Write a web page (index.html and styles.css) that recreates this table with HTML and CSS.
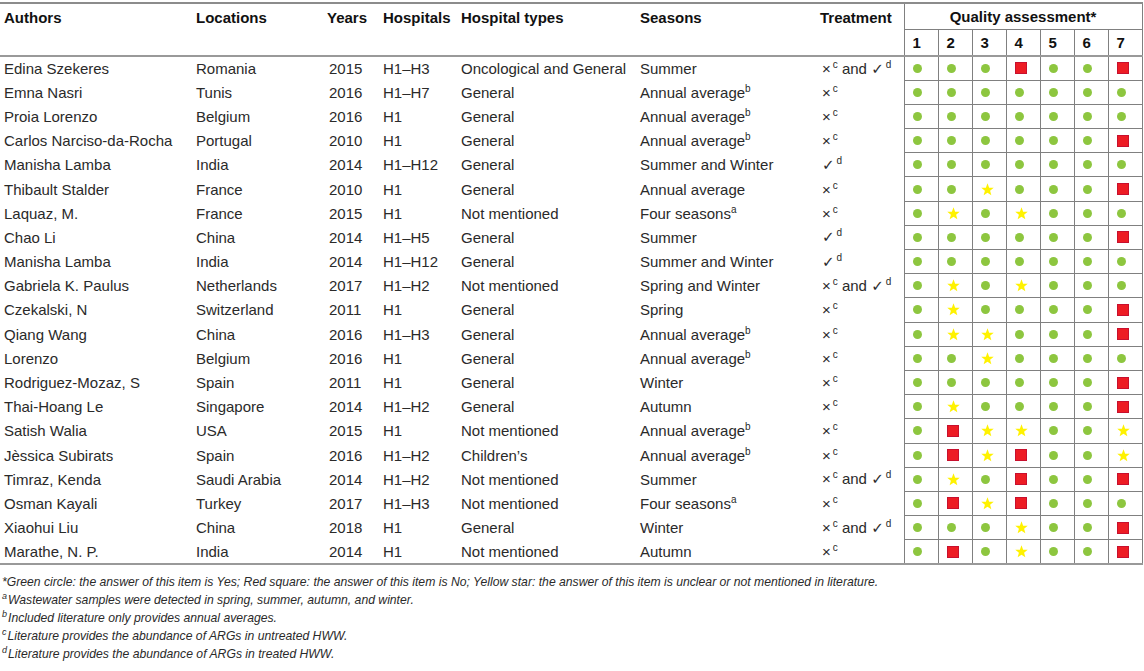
FILE: index.html
```html
<!DOCTYPE html>
<html>
<head>
<meta charset="utf-8">
<link rel="stylesheet" href="styles.css">
</head>
<body>
<table class="tbl">
<colgroup>
<col class="c-auth"><col class="c-loc"><col class="c-year"><col class="c-hosp"><col class="c-type"><col class="c-seas"><col class="c-treat">
<col class="c-q"><col class="c-q"><col class="c-q"><col class="c-q"><col class="c-q"><col class="c-q"><col class="c-q">
</colgroup>
<thead>
<tr class="h1">
<th rowspan="2" class="lh">Authors</th>
<th rowspan="2" class="lh">Locations</th>
<th rowspan="2" class="lh">Years</th>
<th rowspan="2" class="lh">Hospitals</th>
<th rowspan="2" class="lh">Hospital types</th>
<th rowspan="2" class="lh">Seasons</th>
<th rowspan="2" class="lh">Treatment</th>
<th colspan="7" class="qa">Quality assessment*</th>
</tr>
<tr class="h2">
<th class="qn">1</th><th class="qn">2</th><th class="qn">3</th><th class="qn">4</th><th class="qn">5</th><th class="qn">6</th><th class="qn">7</th>
</tr>
</thead>
<tbody>
<tr><td>Edina Szekeres</td><td>Romania</td><td>2015</td><td>H1–H3</td><td>Oncological and General</td><td>Summer</td><td>×<sup class="t">c</sup> and <span class="ck">✓</span><sup class="t">d</sup></td>
<td class="q"><i class="g"></i></td><td class="q"><i class="g"></i></td><td class="q"><i class="g"></i></td><td class="q"><i class="r"></i></td><td class="q"><i class="g"></i></td><td class="q"><i class="g"></i></td><td class="q"><i class="r"></i></td></tr>
<tr><td>Emna Nasri</td><td>Tunis</td><td>2016</td><td>H1–H7</td><td>General</td><td>Annual average<sup>b</sup></td><td>×<sup class="t">c</sup></td>
<td class="q"><i class="g"></i></td><td class="q"><i class="g"></i></td><td class="q"><i class="g"></i></td><td class="q"><i class="g"></i></td><td class="q"><i class="g"></i></td><td class="q"><i class="g"></i></td><td class="q"><i class="g"></i></td></tr>
<tr><td>Proia Lorenzo</td><td>Belgium</td><td>2016</td><td>H1</td><td>General</td><td>Annual average<sup>b</sup></td><td>×<sup class="t">c</sup></td>
<td class="q"><i class="g"></i></td><td class="q"><i class="g"></i></td><td class="q"><i class="g"></i></td><td class="q"><i class="g"></i></td><td class="q"><i class="g"></i></td><td class="q"><i class="g"></i></td><td class="q"><i class="g"></i></td></tr>
<tr><td>Carlos Narciso-da-Rocha</td><td>Portugal</td><td>2010</td><td>H1</td><td>General</td><td>Annual average<sup>b</sup></td><td>×<sup class="t">c</sup></td>
<td class="q"><i class="g"></i></td><td class="q"><i class="g"></i></td><td class="q"><i class="g"></i></td><td class="q"><i class="g"></i></td><td class="q"><i class="g"></i></td><td class="q"><i class="g"></i></td><td class="q"><i class="r"></i></td></tr>
<tr><td>Manisha Lamba</td><td>India</td><td>2014</td><td>H1–H12</td><td>General</td><td>Summer and Winter</td><td><span class="ck">✓</span><sup class="t">d</sup></td>
<td class="q"><i class="g"></i></td><td class="q"><i class="g"></i></td><td class="q"><i class="g"></i></td><td class="q"><i class="g"></i></td><td class="q"><i class="g"></i></td><td class="q"><i class="g"></i></td><td class="q"><i class="g"></i></td></tr>
<tr><td>Thibault Stalder</td><td>France</td><td>2010</td><td>H1</td><td>General</td><td>Annual average</td><td>×<sup class="t">c</sup></td>
<td class="q"><i class="g"></i></td><td class="q"><i class="g"></i></td><td class="q"><svg class="y" viewBox="0 0 24 24"><polygon points="12,0.5 15,8.6 23.5,8.8 16.8,14.2 19.1,22.8 12,17.9 4.9,22.8 7.2,14.2 0.5,8.8 9,8.6"/></svg></td><td class="q"><i class="g"></i></td><td class="q"><i class="g"></i></td><td class="q"><i class="g"></i></td><td class="q"><i class="r"></i></td></tr>
<tr><td>Laquaz, M.</td><td>France</td><td>2015</td><td>H1</td><td>Not mentioned</td><td>Four seasons<sup>a</sup></td><td>×<sup class="t">c</sup></td>
<td class="q"><i class="g"></i></td><td class="q"><svg class="y" viewBox="0 0 24 24"><polygon points="12,0.5 15,8.6 23.5,8.8 16.8,14.2 19.1,22.8 12,17.9 4.9,22.8 7.2,14.2 0.5,8.8 9,8.6"/></svg></td><td class="q"><i class="g"></i></td><td class="q"><svg class="y" viewBox="0 0 24 24"><polygon points="12,0.5 15,8.6 23.5,8.8 16.8,14.2 19.1,22.8 12,17.9 4.9,22.8 7.2,14.2 0.5,8.8 9,8.6"/></svg></td><td class="q"><i class="g"></i></td><td class="q"><i class="g"></i></td><td class="q"><i class="g"></i></td></tr>
<tr><td>Chao Li</td><td>China</td><td>2014</td><td>H1–H5</td><td>General</td><td>Summer</td><td><span class="ck">✓</span><sup class="t">d</sup></td>
<td class="q"><i class="g"></i></td><td class="q"><i class="g"></i></td><td class="q"><i class="g"></i></td><td class="q"><i class="g"></i></td><td class="q"><i class="g"></i></td><td class="q"><i class="g"></i></td><td class="q"><i class="r"></i></td></tr>
<tr><td>Manisha Lamba</td><td>India</td><td>2014</td><td>H1–H12</td><td>General</td><td>Summer and Winter</td><td><span class="ck">✓</span><sup class="t">d</sup></td>
<td class="q"><i class="g"></i></td><td class="q"><i class="g"></i></td><td class="q"><i class="g"></i></td><td class="q"><i class="g"></i></td><td class="q"><i class="g"></i></td><td class="q"><i class="g"></i></td><td class="q"><i class="g"></i></td></tr>
<tr><td>Gabriela K. Paulus</td><td>Netherlands</td><td>2017</td><td>H1–H2</td><td>Not mentioned</td><td>Spring and Winter</td><td>×<sup class="t">c</sup> and <span class="ck">✓</span><sup class="t">d</sup></td>
<td class="q"><i class="g"></i></td><td class="q"><svg class="y" viewBox="0 0 24 24"><polygon points="12,0.5 15,8.6 23.5,8.8 16.8,14.2 19.1,22.8 12,17.9 4.9,22.8 7.2,14.2 0.5,8.8 9,8.6"/></svg></td><td class="q"><i class="g"></i></td><td class="q"><svg class="y" viewBox="0 0 24 24"><polygon points="12,0.5 15,8.6 23.5,8.8 16.8,14.2 19.1,22.8 12,17.9 4.9,22.8 7.2,14.2 0.5,8.8 9,8.6"/></svg></td><td class="q"><i class="g"></i></td><td class="q"><i class="g"></i></td><td class="q"><i class="g"></i></td></tr>
<tr><td>Czekalski, N</td><td>Switzerland</td><td>2011</td><td>H1</td><td>General</td><td>Spring</td><td>×<sup class="t">c</sup></td>
<td class="q"><i class="g"></i></td><td class="q"><svg class="y" viewBox="0 0 24 24"><polygon points="12,0.5 15,8.6 23.5,8.8 16.8,14.2 19.1,22.8 12,17.9 4.9,22.8 7.2,14.2 0.5,8.8 9,8.6"/></svg></td><td class="q"><i class="g"></i></td><td class="q"><i class="g"></i></td><td class="q"><i class="g"></i></td><td class="q"><i class="g"></i></td><td class="q"><i class="r"></i></td></tr>
<tr><td>Qiang Wang</td><td>China</td><td>2016</td><td>H1–H3</td><td>General</td><td>Annual average<sup>b</sup></td><td>×<sup class="t">c</sup></td>
<td class="q"><i class="g"></i></td><td class="q"><svg class="y" viewBox="0 0 24 24"><polygon points="12,0.5 15,8.6 23.5,8.8 16.8,14.2 19.1,22.8 12,17.9 4.9,22.8 7.2,14.2 0.5,8.8 9,8.6"/></svg></td><td class="q"><svg class="y" viewBox="0 0 24 24"><polygon points="12,0.5 15,8.6 23.5,8.8 16.8,14.2 19.1,22.8 12,17.9 4.9,22.8 7.2,14.2 0.5,8.8 9,8.6"/></svg></td><td class="q"><i class="g"></i></td><td class="q"><i class="g"></i></td><td class="q"><i class="g"></i></td><td class="q"><i class="r"></i></td></tr>
<tr><td>Lorenzo</td><td>Belgium</td><td>2016</td><td>H1</td><td>General</td><td>Annual average<sup>b</sup></td><td>×<sup class="t">c</sup></td>
<td class="q"><i class="g"></i></td><td class="q"><i class="g"></i></td><td class="q"><svg class="y" viewBox="0 0 24 24"><polygon points="12,0.5 15,8.6 23.5,8.8 16.8,14.2 19.1,22.8 12,17.9 4.9,22.8 7.2,14.2 0.5,8.8 9,8.6"/></svg></td><td class="q"><i class="g"></i></td><td class="q"><i class="g"></i></td><td class="q"><i class="g"></i></td><td class="q"><i class="g"></i></td></tr>
<tr><td>Rodriguez-Mozaz, S</td><td>Spain</td><td>2011</td><td>H1</td><td>General</td><td>Winter</td><td>×<sup class="t">c</sup></td>
<td class="q"><i class="g"></i></td><td class="q"><i class="g"></i></td><td class="q"><i class="g"></i></td><td class="q"><i class="g"></i></td><td class="q"><i class="g"></i></td><td class="q"><i class="g"></i></td><td class="q"><i class="r"></i></td></tr>
<tr><td>Thai-Hoang Le</td><td>Singapore</td><td>2014</td><td>H1–H2</td><td>General</td><td>Autumn</td><td>×<sup class="t">c</sup></td>
<td class="q"><i class="g"></i></td><td class="q"><svg class="y" viewBox="0 0 24 24"><polygon points="12,0.5 15,8.6 23.5,8.8 16.8,14.2 19.1,22.8 12,17.9 4.9,22.8 7.2,14.2 0.5,8.8 9,8.6"/></svg></td><td class="q"><i class="g"></i></td><td class="q"><i class="g"></i></td><td class="q"><i class="g"></i></td><td class="q"><i class="g"></i></td><td class="q"><i class="r"></i></td></tr>
<tr><td>Satish Walia</td><td>USA</td><td>2015</td><td>H1</td><td>Not mentioned</td><td>Annual average<sup>b</sup></td><td>×<sup class="t">c</sup></td>
<td class="q"><i class="g"></i></td><td class="q"><i class="r"></i></td><td class="q"><svg class="y" viewBox="0 0 24 24"><polygon points="12,0.5 15,8.6 23.5,8.8 16.8,14.2 19.1,22.8 12,17.9 4.9,22.8 7.2,14.2 0.5,8.8 9,8.6"/></svg></td><td class="q"><svg class="y" viewBox="0 0 24 24"><polygon points="12,0.5 15,8.6 23.5,8.8 16.8,14.2 19.1,22.8 12,17.9 4.9,22.8 7.2,14.2 0.5,8.8 9,8.6"/></svg></td><td class="q"><i class="g"></i></td><td class="q"><i class="g"></i></td><td class="q"><svg class="y" viewBox="0 0 24 24"><polygon points="12,0.5 15,8.6 23.5,8.8 16.8,14.2 19.1,22.8 12,17.9 4.9,22.8 7.2,14.2 0.5,8.8 9,8.6"/></svg></td></tr>
<tr><td>Jèssica Subirats</td><td>Spain</td><td>2016</td><td>H1–H2</td><td>Children’s</td><td>Annual average<sup>b</sup></td><td>×<sup class="t">c</sup></td>
<td class="q"><i class="g"></i></td><td class="q"><i class="r"></i></td><td class="q"><svg class="y" viewBox="0 0 24 24"><polygon points="12,0.5 15,8.6 23.5,8.8 16.8,14.2 19.1,22.8 12,17.9 4.9,22.8 7.2,14.2 0.5,8.8 9,8.6"/></svg></td><td class="q"><i class="r"></i></td><td class="q"><i class="g"></i></td><td class="q"><i class="g"></i></td><td class="q"><svg class="y" viewBox="0 0 24 24"><polygon points="12,0.5 15,8.6 23.5,8.8 16.8,14.2 19.1,22.8 12,17.9 4.9,22.8 7.2,14.2 0.5,8.8 9,8.6"/></svg></td></tr>
<tr><td>Timraz, Kenda</td><td>Saudi Arabia</td><td>2014</td><td>H1–H2</td><td>Not mentioned</td><td>Summer</td><td>×<sup class="t">c</sup> and <span class="ck">✓</span><sup class="t">d</sup></td>
<td class="q"><i class="g"></i></td><td class="q"><svg class="y" viewBox="0 0 24 24"><polygon points="12,0.5 15,8.6 23.5,8.8 16.8,14.2 19.1,22.8 12,17.9 4.9,22.8 7.2,14.2 0.5,8.8 9,8.6"/></svg></td><td class="q"><i class="g"></i></td><td class="q"><i class="r"></i></td><td class="q"><i class="g"></i></td><td class="q"><i class="g"></i></td><td class="q"><i class="r"></i></td></tr>
<tr><td>Osman Kayali</td><td>Turkey</td><td>2017</td><td>H1–H3</td><td>Not mentioned</td><td>Four seasons<sup>a</sup></td><td>×<sup class="t">c</sup></td>
<td class="q"><i class="g"></i></td><td class="q"><i class="r"></i></td><td class="q"><svg class="y" viewBox="0 0 24 24"><polygon points="12,0.5 15,8.6 23.5,8.8 16.8,14.2 19.1,22.8 12,17.9 4.9,22.8 7.2,14.2 0.5,8.8 9,8.6"/></svg></td><td class="q"><i class="r"></i></td><td class="q"><i class="g"></i></td><td class="q"><i class="g"></i></td><td class="q"><i class="g"></i></td></tr>
<tr><td>Xiaohui Liu</td><td>China</td><td>2018</td><td>H1</td><td>General</td><td>Winter</td><td>×<sup class="t">c</sup> and <span class="ck">✓</span><sup class="t">d</sup></td>
<td class="q"><i class="g"></i></td><td class="q"><i class="g"></i></td><td class="q"><i class="g"></i></td><td class="q"><svg class="y" viewBox="0 0 24 24"><polygon points="12,0.5 15,8.6 23.5,8.8 16.8,14.2 19.1,22.8 12,17.9 4.9,22.8 7.2,14.2 0.5,8.8 9,8.6"/></svg></td><td class="q"><i class="g"></i></td><td class="q"><i class="g"></i></td><td class="q"><i class="r"></i></td></tr>
<tr class="last"><td>Marathe, N. P.</td><td>India</td><td>2014</td><td>H1</td><td>Not mentioned</td><td>Autumn</td><td>×<sup class="t">c</sup></td>
<td class="q"><i class="g"></i></td><td class="q"><i class="r"></i></td><td class="q"><i class="g"></i></td><td class="q"><svg class="y" viewBox="0 0 24 24"><polygon points="12,0.5 15,8.6 23.5,8.8 16.8,14.2 19.1,22.8 12,17.9 4.9,22.8 7.2,14.2 0.5,8.8 9,8.6"/></svg></td><td class="q"><i class="g"></i></td><td class="q"><i class="g"></i></td><td class="q"><i class="r"></i></td></tr>
</tbody>
</table>
<div class="notes">
<p>*Green circle: the answer of this item is Yes; Red square: the answer of this item is No; Yellow star: the answer of this item is unclear or not mentioned in literature.</p>
<p><sup>a</sup>Wastewater samples were detected in spring, summer, autumn, and winter.</p>
<p><sup>b</sup>Included literature only provides annual averages.</p>
<p><sup>c</sup>Literature provides the abundance of ARGs in untreated HWW.</p>
<p><sup>d</sup>Literature provides the abundance of ARGs in treated HWW.</p>
</div>
</body>
</html>
```
FILE: styles.css
```css
html, body {
  margin: 0;
  padding: 0;
  background: #fff;
}
body {
  font-family: "Liberation Sans", Arial, sans-serif;
  color: #2a2a2a;
  font-size: 15px;
}
.tbl {
  margin-top: 2px;
  border-collapse: collapse;
  table-layout: fixed;
  width: 1142px;
}
.c-auth { width: 192px; }
.c-loc { width: 131px; }
.c-year { width: 56px; }
.c-hosp { width: 78px; }
.c-type { width: 179px; }
.c-seas { width: 180px; }
.c-treat { width: 88px; }
.c-q { width: 34px; }

.tbl th, .tbl td {
  padding: 0 0 0 4px;
  text-align: left;
  white-space: nowrap;
  overflow: visible;
}
.tbl th {
  font-weight: bold;
  color: #111;
}
.h1 th {
  border-top: 2px solid #8c8c8c;
  height: 25px;
}
.h2 th {
  height: 25px;
  border-bottom: 2px solid #999;
}
.lh {
  vertical-align: top;
  padding-top: 5px !important;
  border-bottom: 2px solid #999;
}
.qa {
  text-align: center !important;
  padding-left: 0 !important;
  border-left: 1px solid #808080;
  border-right: 1px solid #808080;
  border-bottom: 1px solid #808080;
}
.qn {
  padding-left: 8px !important;
  border-left: 1px solid #808080;
  border-right: 1px solid #808080;
}
.tbl tbody tr {
  height: 24.2px;
}
.tbl td {
  vertical-align: middle;
  line-height: 17px;
}
.tbl td:nth-child(3) {
  padding-left: 6px;
}
.tbl td:nth-child(7) {
  padding-left: 6px;
}
.q {
  padding-left: 8px !important;
  border: 1px solid #808080;
  line-height: 0 !important;
}
.tbl tbody tr:first-child .q {
  border-top: 2px solid #999;
}
.tbl tr.last td {
  border-bottom: 2px solid #999;
}
.g {
  display: inline-block;
  width: 9px;
  height: 9px;
  border-radius: 50%;
  background: #8dc63f;
}
.r {
  display: inline-block;
  width: 10px;
  height: 10px;
  background: #ed1c24;
  border: 1px solid #c8102e;
}
.y {
  display: inline-block;
  width: 13px;
  height: 13px;
  fill: #fff200;
}
sup {
  font-size: 10px;
  line-height: 0;
  vertical-align: 6px;
  margin-left: 0;
}
sup.t {
  margin-left: 2px;
}
.ck {
  font-family: "DejaVu Sans", sans-serif;
  font-size: 15px;
  font-weight: bold;
}
.notes {
  padding: 8px 0 0 2px;
  font-style: italic;
  font-size: 12.2px;
  color: #2a2a2a;
}
.notes p {
  margin: 0;
  line-height: 18px;
}
.notes sup {
  font-size: 9px;
  vertical-align: 5px;
  margin-left: 0;
  margin-right: 1px;
}
```
